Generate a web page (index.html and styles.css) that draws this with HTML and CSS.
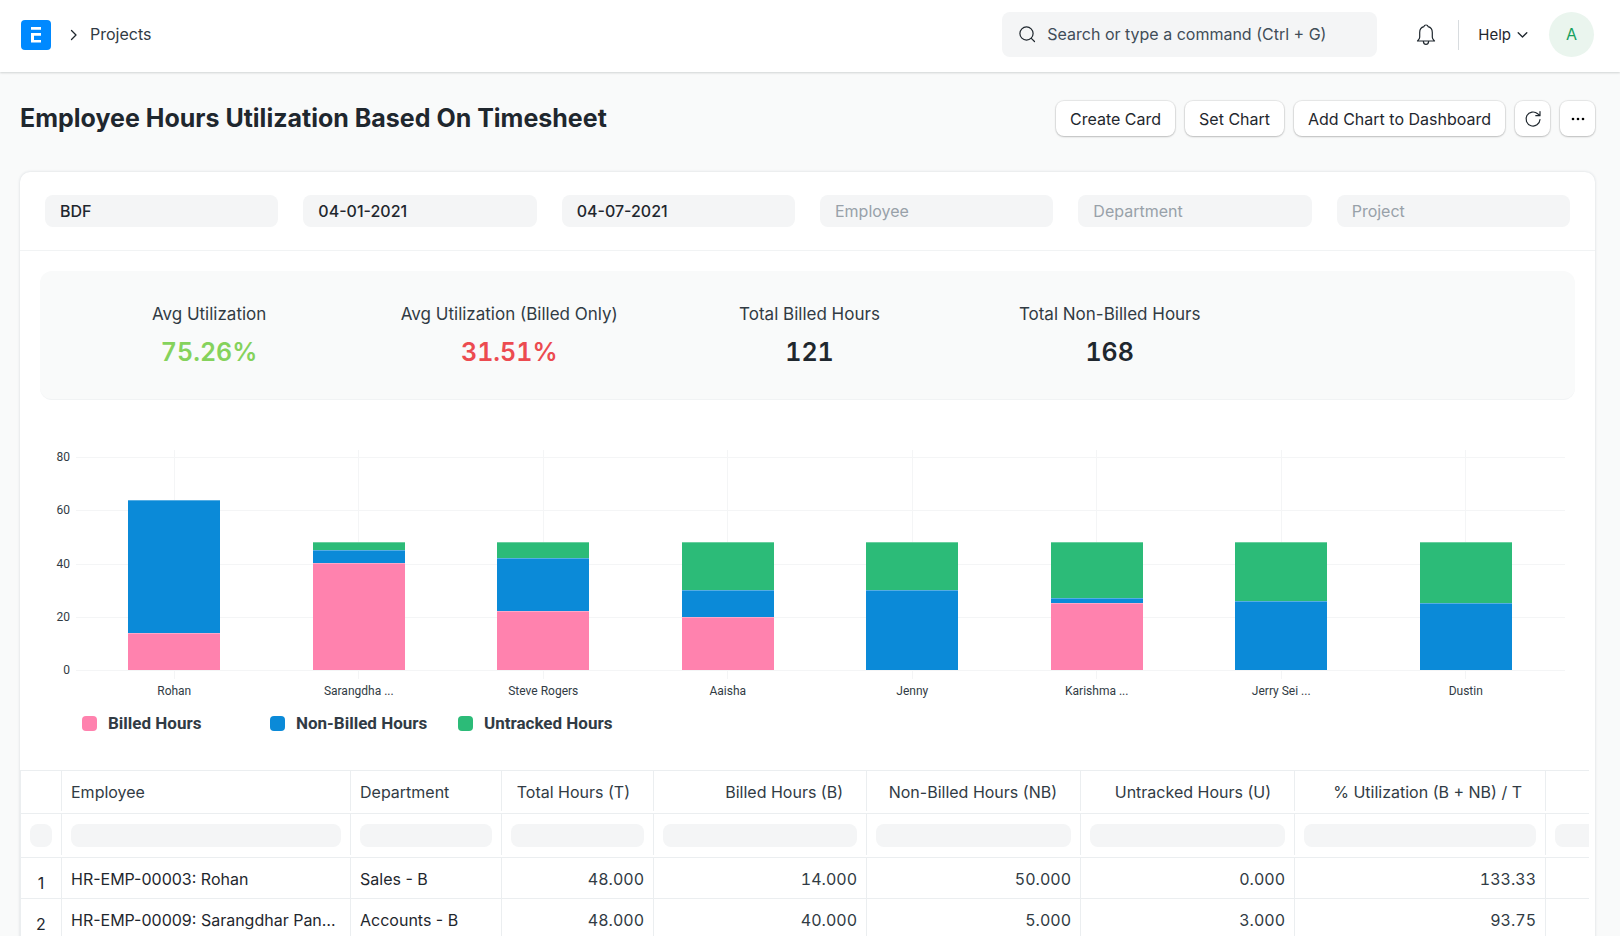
FILE: index.html
```html
<!DOCTYPE html>
<html lang="en">
<head>
<meta charset="utf-8">
<meta name="viewport" content="width=device-width, initial-scale=1">
<title>Employee Hours Utilization Based On Timesheet</title>
<link rel="stylesheet" href="styles.css">
</head>
<body>
<header class="navbar">
  <nav class="crumbs" aria-label="Breadcrumb">
    <a class="logo" href="#" aria-label="Home">
      <svg width="30" height="30" viewBox="0 0 30 30"><rect width="30" height="30" rx="4" fill="#0089ff"/><path d="M10 7h10v2.800H10zM10 13h10v2.800h-7v4.200h7v2.600H10z" fill="#fff"/></svg>
    </a>
    <svg class="sep" width="8" height="12" viewBox="0 0 8 12"><path d="M1.500 1.500 6 6 1.500 10.500" class="line"/></svg>
    <a class="crumb" href="#">Projects</a>
  </nav>
  <div class="nav-right">
    <label class="search">
      <svg width="18" height="18" viewBox="0 0 18 18"><circle cx="8.500" cy="8.500" r="6.600" class="thin"/><path d="M13.300 13.300 16.500 16.500" class="thin"/></svg>
      <input type="text" placeholder="Search or type a command (Ctrl + G)" aria-label="Search">
    </label>
    <button class="icon-btn bell" aria-label="Notifications">
      <svg width="20" height="22" viewBox="0 0 20 22"><path d="M1.500 17c1.500-1.300 2.200-2 2.200-3.700V8.600c0-3.300 1.900-5.300 4.200-5.900C8 1.700 8.800 1 10 1s2 .7 2.100 1.700c2.300.6 4.200 2.600 4.200 5.900v4.700c0 1.700.7 2.400 2.200 3.700zM7.400 17.600c.2 1.700 1.100 2.700 2.600 2.700s2.400-1 2.600-2.700" class="thin"/></svg>
    </button>
    <span class="divider"></span>
    <button class="icon-btn help">Help <svg width="11" height="8" viewBox="0 0 11 8"><path d="M1.200 1.700 5.500 6 9.800 1.700" class="line"/></svg></button>
    <button class="avatar">A</button>
  </div>
</header>

<div class="page-head">
  <h1>Employee Hours Utilization Based On Timesheet</h1>
  <div class="actions">
    <button class="btn">Create Card</button>
    <button class="btn">Set Chart</button>
    <button class="btn">Add Chart to Dashboard</button>
    <button class="btn square" aria-label="Refresh"><svg width="18" height="18" viewBox="0 0 18 18"><path d="M16 9.500a7 7 0 1 1-2.300-5.700L16 5.600M16 1.500v4.200h-4.200" class="thin"/></svg></button>
    <button class="btn square" aria-label="More"><svg width="14" height="4" viewBox="0 0 14 4"><circle cx="2" cy="2" r="1.300"/><circle cx="7" cy="2" r="1.300"/><circle cx="12" cy="2" r="1.300"/></svg></button>
  </div>
</div>

<main class="card">
  <form class="filters">
    <input type="text" value="BDF" aria-label="Company">
    <input type="text" value="04-01-2021" aria-label="From date">
    <input type="text" value="04-07-2021" aria-label="To date">
    <input type="text" placeholder="Employee" aria-label="Employee">
    <input type="text" placeholder="Department" aria-label="Department">
    <input type="text" placeholder="Project" aria-label="Project">
  </form>

  <section class="summary">
    <div class="stat"><span>Avg Utilization</span><strong class="good">75.26%</strong></div>
    <div class="stat"><span>Avg Utilization (Billed Only)</span><strong class="bad">31.51%</strong></div>
    <div class="stat"><span>Total Billed Hours</span><strong>121</strong></div>
    <div class="stat"><span>Total Non-Billed Hours</span><strong>168</strong></div>
  </section>

  <section class="chart">
    <div class="axis"><span>80</span><span>60</span><span>40</span><span>20</span><span>0</span></div>
    <div class="plot">
      <div class="gridlines"><i></i><i></i><i></i><i></i></div>
      <div class="columns">
        <div class="col"><div class="bar"><i class="nb" style="flex-grow:50"></i><i class="b" style="flex-grow:14"></i></div></div>
        <div class="col"><div class="bar"><i class="u" style="flex-grow:3"></i><i class="nb" style="flex-grow:5"></i><i class="b" style="flex-grow:40"></i></div></div>
        <div class="col"><div class="bar"><i class="u" style="flex-grow:6"></i><i class="nb" style="flex-grow:20"></i><i class="b" style="flex-grow:22"></i></div></div>
        <div class="col"><div class="bar"><i class="u" style="flex-grow:18"></i><i class="nb" style="flex-grow:10"></i><i class="b" style="flex-grow:20"></i></div></div>
        <div class="col"><div class="bar"><i class="u" style="flex-grow:18"></i><i class="nb" style="flex-grow:30"></i></div></div>
        <div class="col"><div class="bar"><i class="u" style="flex-grow:21"></i><i class="nb" style="flex-grow:2"></i><i class="b" style="flex-grow:25"></i></div></div>
        <div class="col"><div class="bar"><i class="u" style="flex-grow:22"></i><i class="nb" style="flex-grow:26"></i></div></div>
        <div class="col"><div class="bar"><i class="u" style="flex-grow:23"></i><i class="nb" style="flex-grow:25"></i></div></div>
      </div>
    </div>
    <div class="names"><span>Rohan</span><span>Sarangdha ...</span><span>Steve Rogers</span><span>Aaisha</span><span>Jenny</span><span>Karishma ...</span><span>Jerry Sei ...</span><span>Dustin</span></div>
    <div class="legend">
      <span><i class="b"></i>Billed Hours</span><span><i class="nb"></i>Non-Billed Hours</span><span><i class="u"></i>Untracked Hours</span>
    </div>
  </section>

  <div class="table-wrap">
    <table>
      <colgroup><col class="w-idx"><col class="w-emp"><col class="w-dep"><col class="w-tot"><col class="w-bil"><col class="w-num"><col class="w-num"><col class="w-pct"><col class="w-pct"></colgroup>
      <thead>
        <tr class="titles"><th></th><th>Employee</th><th>Department</th><th class="n">Total Hours (T)</th><th class="n">Billed Hours (B)</th><th class="n">Non-Billed Hours (NB)</th><th class="n">Untracked Hours (U)</th><th class="n">% Utilization (B + NB) / T</th><th></th></tr>
        <tr class="finder"><td><input aria-label="Filter row"></td><td><input aria-label="Filter employee"></td><td><input aria-label="Filter department"></td><td><input aria-label="Filter total hours"></td><td><input aria-label="Filter billed hours"></td><td><input aria-label="Filter non-billed hours"></td><td><input aria-label="Filter untracked hours"></td><td><input aria-label="Filter utilization"></td><td><input aria-label="Filter billed utilization"></td></tr>
      </thead>
      <tbody>
        <tr><td class="idx">1</td><td>HR-EMP-00003: Rohan</td><td>Sales - B</td><td class="n">48.000</td><td class="n">14.000</td><td class="n">50.000</td><td class="n">0.000</td><td class="n">133.33</td><td></td></tr>
        <tr><td class="idx">2</td><td>HR-EMP-00009: Sarangdhar Panditrao</td><td>Accounts - B</td><td class="n">48.000</td><td class="n">40.000</td><td class="n">5.000</td><td class="n">3.000</td><td class="n">93.75</td><td></td></tr>
      </tbody>
    </table>
  </div>
</main>
</body>
</html>
```
FILE: styles.css
```css
* { box-sizing: border-box; }
html { height: 100%; }
body {
  margin: 0;
  height: 100%;
  overflow: hidden;
  background: #f9fafa;
  color: #1f272e;
  font: 16px/24px Inter, "Liberation Sans", sans-serif;
}
a { color: inherit; text-decoration: none; }
button, input { font: inherit; color: inherit; }
svg { display: block; flex: none; }
.line { fill: none; stroke: #1f272e; stroke-width: 1.3; stroke-linecap: round; stroke-linejoin: round; }
.thin { fill: none; stroke: #1f272e; stroke-width: 1.2; stroke-linecap: round; stroke-linejoin: round; }

.navbar {
  display: flex;
  align-items: center;
  justify-content: space-between;
  height: 72px;
  padding: 0 26px 3px 21px;
  background: #fff;
  box-shadow: 0 1px 2px rgba(0, 20, 20, .16);
}
.crumbs { display: flex; align-items: center; }
.sep { margin: 0 12px 0 19px; }
.crumb { padding-bottom: 2px; color: #313b44; }
.nav-right { display: flex; align-items: center; }
.search {
  display: flex;
  align-items: center;
  gap: 11px;
  width: 375px;
  height: 45px;
  padding: 0 16px 1px;
  border-radius: 8px;
  background: #f4f5f6;
}
.search input { flex: 1; min-width: 0; padding: 0; border: 0; background: none; outline: 0; }
.search input::placeholder { color: #414d58; opacity: 1; }
.icon-btn { display: flex; align-items: center; padding: 0; border: 0; background: none; }
.bell { margin: 0 22px 0 39px; }
.divider { width: 1px; height: 30px; background: #d8dcdf; }
.help { gap: 6px; margin: 0 21px 0 19px; font-size: 15px; }
.avatar { width: 45px; height: 45px; padding: 0 0 1px; border: 0; border-radius: 50%; background: #eaf5ee; color: #16a05d; }

.page-head {
  display: flex;
  align-items: center;
  justify-content: space-between;
  height: 100px;
  padding: 0 25px 8px 20px;
}
h1 { margin: 0; font-size: 25px; font-weight: 700; line-height: 32px; }
.actions { display: flex; gap: 10px; padding-top: 1px; }
.btn {
  display: flex;
  align-items: center;
  justify-content: center;
  height: 35px;
  padding: 0 14px;
  border: 0;
  border-radius: 8px;
  background: #fff;
  box-shadow: 0 0 1px 1px rgba(0, 0, 0, .08), 0 1px 2px rgba(0, 0, 0, .18);
}
.square { width: 35px; padding: 0; }

.card {
  margin: 0 25px 0 20px;
  border-radius: 10px 10px 0 0;
  background: #fff;
  box-shadow: 0 0 3px rgba(17, 43, 66, .16);
}
.filters {
  display: grid;
  grid-template-columns: repeat(6, 1fr);
  gap: 25px;
  padding: 23px 25px;
  border-bottom: 1px solid #f1f3f4;
}
.filters input { width: 100%; min-width: 0; height: 32px; padding: 0 15px; border: 0; border-radius: 8px; background: #f4f5f6; font-weight: 500; }
.filters input::placeholder { color: #98a1a9; font-weight: 400; opacity: 1; }

.summary {
  display: grid;
  grid-template-columns: repeat(5, 1fr);
  margin: 20px 20px 0;
  padding: 29px 15px 32px 19px;
  border-bottom: 1px solid #f1f3f4;
  border-radius: 12px;
  background: #f9fafa;
}
.stat { display: flex; flex-direction: column; align-items: center; gap: 9px; font-size: 17px; line-height: 28px; color: #313b44; }
.stat strong { font-size: 25px; font-weight: 600; line-height: 30px; color: #1f272e; font-variant-numeric: tabular-nums; }
.stat .good { color: #85d25c; }
.stat .bad { color: #ec4b50; }

.chart {
  display: grid;
  grid-template-columns: 50px 1fr;
  column-gap: 6px;
  padding: 50px 30px 0 0;
  font: 12px/16px Roboto, sans-serif;
  color: #313b44;
}
.axis { display: flex; flex-direction: column; justify-content: space-between; height: 229px; margin-top: -1px; text-align: right; }
.plot { display: grid; height: 229px; }
.gridlines, .columns { grid-area: 1 / 1; }
.gridlines { display: flex; flex-direction: column; margin: 7px 0 8px; border-bottom: 1px solid #f4f5f6; }
.gridlines i { flex: 1; border-top: 1px solid #f4f5f6; }
.columns, .names { display: grid; grid-template-columns: repeat(8, 1fr); margin: 0 7px 0 6px; }
.col { display: flex; flex-direction: column; align-items: center; justify-content: flex-end; padding-bottom: 9px; background: linear-gradient(#f4f5f6, #f4f5f6) center / 1px 100% no-repeat; }
.bar { display: flex; flex-direction: column; width: 50%; height: 128px; }
.col:first-child .bar { height: 170px; }
.bar i { flex: 1 1 0; box-shadow: inset 0 1px rgba(255, 255, 255, .3); }
.b { background: #ff82ae; }
.nb { background: #0b8ad8; }
.u { background: #2cbb78; }
.names { grid-column: 2; margin-top: 4px; text-align: center; }
.legend { grid-column: 1 / -1; display: flex; margin: 13px 0 0 62px; font-size: 17px; font-weight: 700; line-height: 22px; }
.legend span { display: flex; align-items: center; width: 188px; white-space: nowrap; }
.legend i { flex: none; width: 15px; height: 15px; margin-right: 11px; border-radius: 4px; }

.table-wrap { margin: 36px 6px 0 0; overflow: hidden; }
table { width: 1777px; table-layout: fixed; border-collapse: separate; border-spacing: 0; border-top: 1px solid #ebeef0; border-left: 1px solid #ebeef0; }
.w-idx { width: 41px; }
.w-emp { width: 289px; }
.w-dep { width: 151px; }
.w-tot { width: 152px; }
.w-bil { width: 213px; }
.w-num { width: 214px; }
.w-pct { width: 251px; }
th, td { height: 41px; padding: 0 9px; border-right: 1px solid #ebeef0; border-bottom: 1px solid #ebeef0; overflow: hidden; text-align: left; text-overflow: ellipsis; white-space: nowrap; font-weight: 400; color: #313b44; }
.titles th, .finder td { border-right: 0; background: linear-gradient(#ebeef0, #ebeef0) right top / 1px calc(100% - 2px) no-repeat; }
.titles th { height: 43px; }
.finder td { height: 44px; padding-right: 10px; }
.finder input { display: block; width: 100%; height: 23px; padding: 0; border: 0; border-radius: 8px; background: #f4f5f6; }
th.n, td.n { text-align: right; }
.titles .n { padding-right: 24px; }
tbody td { padding-top: 2px; color: #1f272e; }
tbody td.n { color: #313b44; font-variant-numeric: tabular-nums; }
tbody .idx { padding-top: 9px; text-align: center; }
```
